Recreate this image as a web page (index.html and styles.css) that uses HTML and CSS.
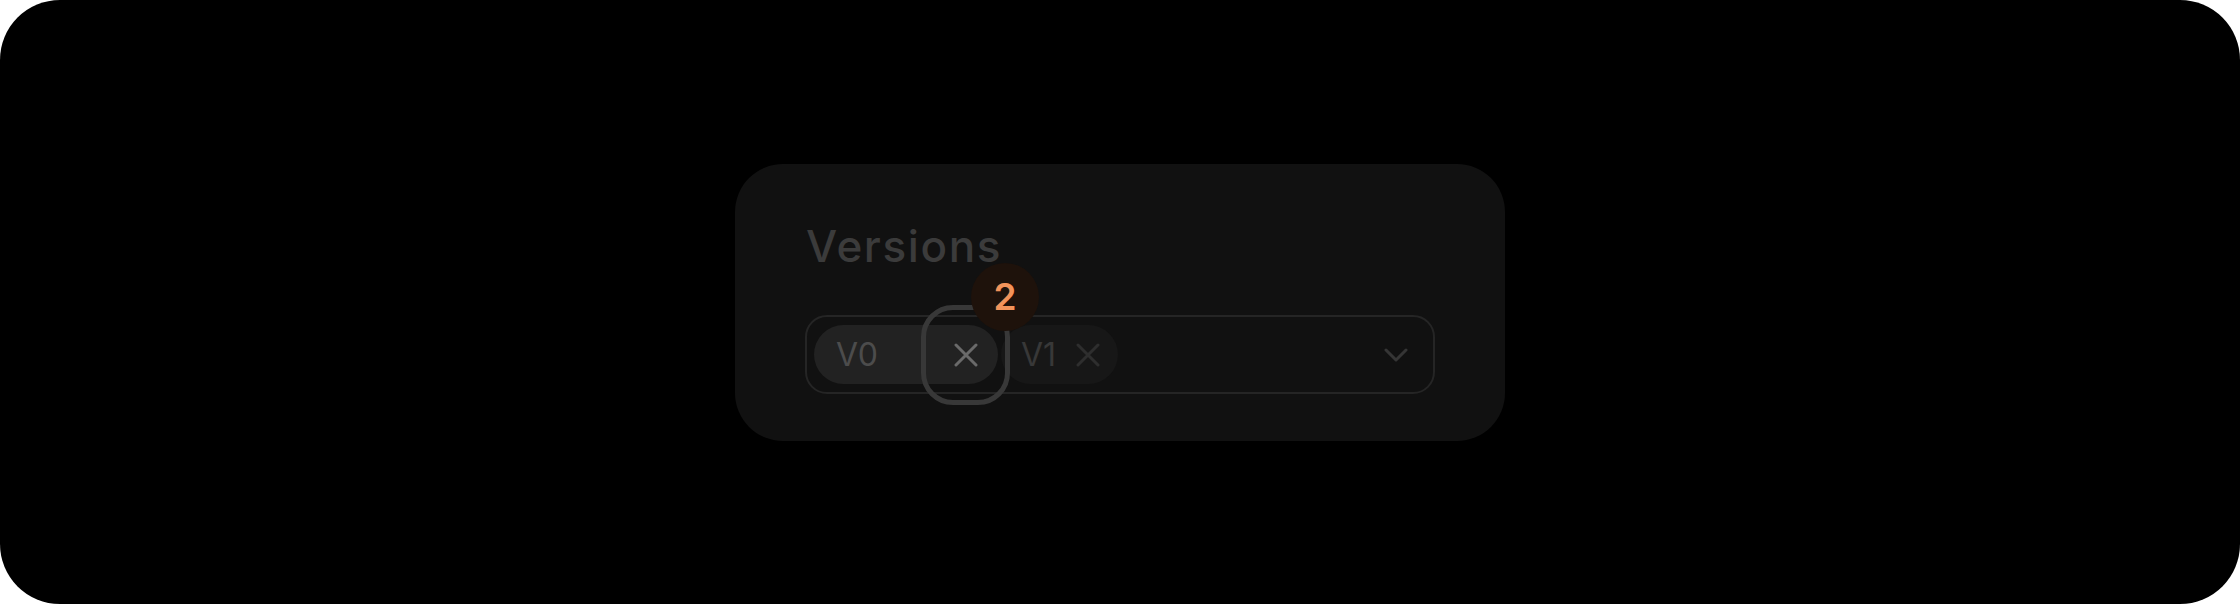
FILE: index.html
```html
<!DOCTYPE html>
<html lang="en">
<head>
<meta charset="utf-8">
<title>Versions</title>
<link rel="stylesheet" href="styles.css">
</head>
<body>
<div class="frame">
  <div class="card">
    <div class="title">Versions</div>
    <div class="select">
      <div class="chips">
        <div class="chip chip-active">
          <span class="chip-label">V0</span>
          <span class="chip-remove">
            <svg class="x-icon" viewBox="0 0 24 24" width="24" height="24"><path d="M2 2 L22 22 M22 2 L2 22" fill="none" stroke="currentColor" stroke-width="3" stroke-linecap="round"/></svg>
            <span class="focus-ring"></span>
            <span class="badge">2</span>
          </span>
        </div>
        <div class="chip chip-dim">
          <span class="chip-label">V1</span>
          <span class="chip-remove">
            <svg class="x-icon" viewBox="0 0 24 24" width="24" height="24"><path d="M2 2 L22 22 M22 2 L2 22" fill="none" stroke="currentColor" stroke-width="3" stroke-linecap="round"/></svg>
          </span>
        </div>
      </div>
      <svg class="chevron" viewBox="0 0 24 14" width="24" height="14"><path d="M2 2 L12 12 L22 2" fill="none" stroke="currentColor" stroke-width="3" stroke-linecap="round" stroke-linejoin="round"/></svg>
    </div>
  </div>
</div>
</body>
</html>
```

FILE: styles.css
```css
html, body {
  margin: 0;
  padding: 0;
  background: #ffffff;
}

.frame {
  width: 2240px;
  height: 604px;
  background: #000000;
  border-radius: 60px;
  display: flex;
  align-items: center;
  justify-content: center;
  font-family: "Inter", "Noto Sans", sans-serif;
}

.card {
  box-sizing: border-box;
  width: 770px;
  height: 277px;
  margin-top: 1px;
  background: #111111;
  border-radius: 48px;
  padding: 52px 70px 47px 70px;
  display: flex;
  flex-direction: column;
}

.title {
  font-size: 44px;
  font-weight: 500;
  letter-spacing: 1.6px;
  line-height: 60px;
  color: #3b3b3b;
  margin-left: 1px;
  margin-bottom: 39px;
}

.select {
  box-sizing: border-box;
  width: 630px;
  height: 79px;
  border: 2px solid #252525;
  border-radius: 22px;
  padding: 8px 25px 8px 7px;
  display: flex;
  align-items: center;
  justify-content: space-between;
}

.chips {
  display: flex;
  align-items: center;
  gap: 3px;
}

.chip {
  box-sizing: border-box;
  height: 59px;
  border-radius: 30px;
  display: flex;
  align-items: center;
  padding: 0 20px 0 22px;
}

.chip-label {
  font-size: 32px;
  font-weight: 400;
  line-height: 1;
}

.chip-active {
  width: 184px;
  background: #222222;
  color: #4c4c4c;
}

.chip-active .chip-label {
  flex: 1;
}

.chip-active .chip-remove {
  color: #6a6a6a;
}

.chip-dim {
  background: #171717;
  color: #383838;
  padding-left: 20px;
  padding-right: 18px;
}

.chip-dim .chip-label {
  margin-right: 20px;
}

.chip-dim .chip-remove {
  color: #2e2e2e;
}

.chip-remove {
  position: relative;
  width: 24px;
  height: 24px;
  display: block;
}

.x-icon {
  display: block;
}

.focus-ring {
  position: absolute;
  left: -33px;
  top: -38px;
  width: 89px;
  height: 100px;
  box-sizing: border-box;
  border: 5px solid #383838;
  border-radius: 32px;
}

.badge {
  position: absolute;
  left: 17px;
  top: -80px;
  width: 68px;
  height: 68px;
  border-radius: 50%;
  background: #1e120b;
  color: #f2935a;
  font-size: 37px;
  font-weight: 600;
  display: flex;
  align-items: center;
  justify-content: center;
  line-height: 1;
}

.chevron {
  display: block;
  color: #353535;
}
```
